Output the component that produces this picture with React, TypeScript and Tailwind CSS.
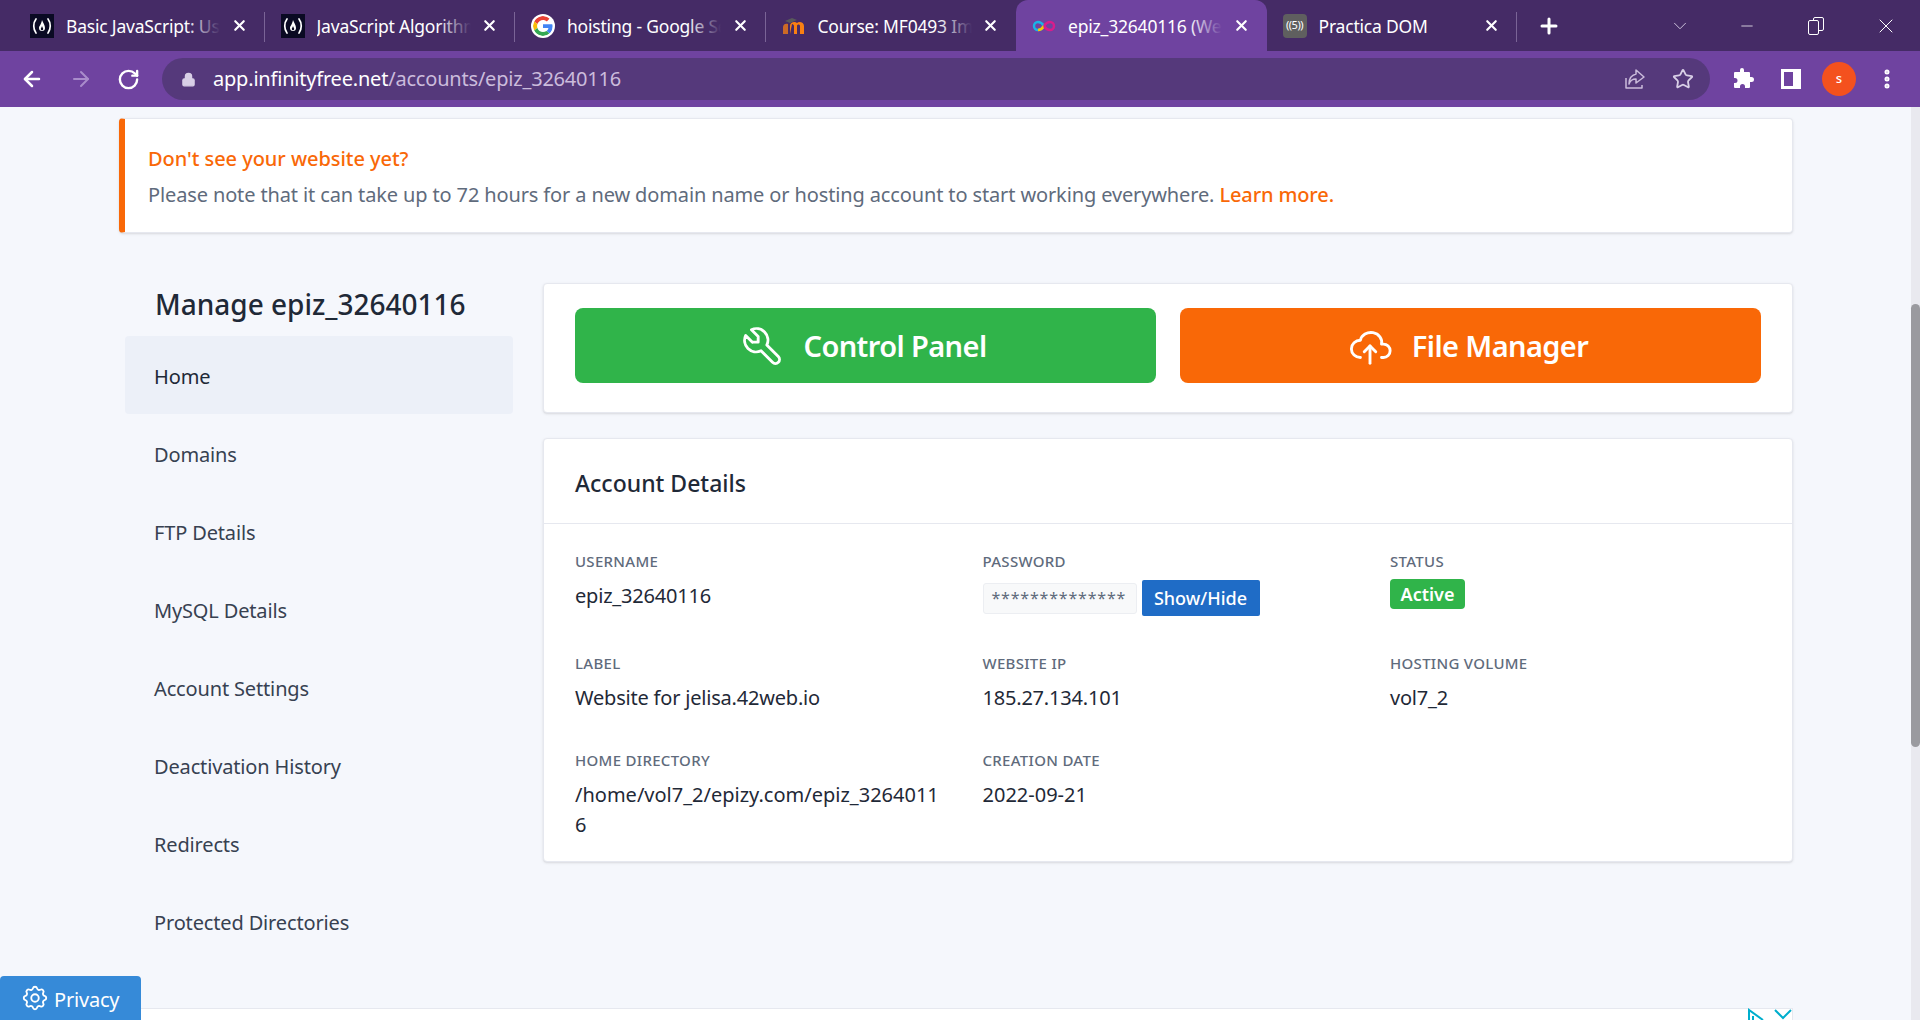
import React from "react";
import { ArrowLeft, ArrowRight, RotateCw, Lock, Star, X, Plus, ChevronDown, Minus, EllipsisVertical } from "lucide-react";
import { TbTool, TbCloudUpload, TbSettings } from "react-icons/tb";

const Fcc = () => (
  <svg viewBox="0 0 24 24" className="h-6 w-6 shrink-0 bg-[#0a0a23]" fill="none" stroke="white" strokeWidth="1.700" strokeLinecap="round">
    <path d="M6 5c-3 4-3 10 0 14" />
    <path d="M18 5c3 4 3 10 0 14" />
    <path d="M12 6c1 3 3 5 3 8a3 3 0 0 1-6 0c0-2 2-3 3-8z" fill="white" stroke="none" />
    <path d="M12 12c.5 1.500 1.200 2 1.200 3a1.200 1.200 0 0 1-2.400 0c0-1 .8-1.500 1.200-3z" fill="#0a0a23" stroke="none" />
  </svg>
);
const Google = () => (
  <svg viewBox="0 0 48 48" className="h-6 w-6 shrink-0 rounded-full bg-white p-[2px]">
    <path fill="#EA4335" d="M24 9.500c3.500 0 6.700 1.200 9.200 3.600l6.900-6.900C35.900 2.400 30.400 0 24 0 14.600 0 6.500 5.400 2.600 13.200l8 6.200C12.500 13.700 17.800 9.500 24 9.500z" />
    <path fill="#4285F4" d="M47 24.500c0-1.600-.1-3.100-.4-4.500H24v9h13c-.6 3-2.200 5.500-4.700 7.200l7.700 6C44.400 38 47 31.900 47 24.500z" />
    <path fill="#FBBC05" d="M10.600 28.600A14.500 14.500 0 0 1 10.600 19.400l-8-6.200a24 24 0 0 0 0 21.600l8-6.200z" />
    <path fill="#34A853" d="M24 48c6.500 0 11.900-2.100 15.900-5.800l-7.700-6c-2.200 1.400-4.900 2.300-8.200 2.300-6.200 0-11.500-4.200-13.400-9.900l-8 6.200C6.500 42.600 14.600 48 24 48z" />
  </svg>
);
const Moodle = () => (
  <svg viewBox="0 0 24 24" className="h-6 w-6 shrink-0">
    <path d="M1 20v-7c0-3 3-4 5-3v10z" fill="#f98012" opacity="0.75" />
    <path d="M8 20v-8c0-4 5-5 7-3 2-2 7-1 7 3v8h-4v-8c0-2-3-2-3 0v8h-3v-8c0-1-1-2-2-2z" fill="#f98012" />
    <path d="M3 7l7-3 5 2-7 3z" fill="#58595b" />
  </svg>
);
const Infinity2 = () => (
  <svg viewBox="0 0 24 24" className="h-6 w-6 shrink-0" fill="none" strokeWidth="2.500">
    <path d="M12 12c-2-3-4-4-6-4a4 4 0 0 0 0 8c2 0 4-1 6-4" stroke="#19b5e5" />
    <path d="M6 16c2 0 4-1 6-4" stroke="#f7c800" />
    <path d="M12 12c2-3 4-4 6-4a4 4 0 0 1 0 8c-2 0-4-1-6-4" stroke="#d81d8c" />
  </svg>
);
const Radio = () => (
  <div className="flex h-6 w-6 shrink-0 items-center justify-center rounded-[4px] bg-[#5f5f5f] text-[11px] tracking-[-0.5px] text-white">((5))</div>
);

function Tab({ icon, title, active, sep, fade = true }: { icon: React.ReactNode; title: string; active?: boolean; sep?: boolean; fade?: boolean }) {
  return (
    <div className={`relative flex h-[51px] w-[250.500px] shrink-0 items-center pl-[16px] pr-[14px] ${active ? "rounded-t-[12px] bg-[#6f43a0]" : ""}`}>
      {icon}
      <div className="relative ml-[12px] w-[154px] overflow-hidden whitespace-nowrap text-[17.500px] leading-[24px] tracking-[-0.2px] text-white">
        {title}
        {fade && (
          <div className={`absolute inset-y-0 right-0 w-[34px] bg-gradient-to-l ${active ? "from-[#6f43a0]" : "from-[#452b66]"} to-transparent`} />
        )}
      </div>
      <X className="ml-auto mr-[3px] h-[17px] w-[17px] text-white" strokeWidth={3} />
      {sep && <div className="absolute right-0 top-[12px] h-[30px] w-px bg-[#7a6496]" />}
    </div>
  );
}

const Label = ({ children }: { children: React.ReactNode }) => (
  <div className="text-[15px] font-medium uppercase leading-[20px] tracking-[0.3px] text-[#5f6b7c]">{children}</div>
);

const Field = ({ label, children }: { label: string; children: React.ReactNode }) => (
  <div className="min-w-0">
    <Label>{label}</Label>
    <div className="mt-[10px] break-all pr-[40px] text-[20px] leading-[30px] tracking-[-0.2px] text-[#1f2937]">{children}</div>
  </div>
);

const navItems = ["Domains", "FTP Details", "MySQL Details", "Account Settings", "Deactivation History", "Redirects", "Protected Directories"];

export default function App() {
  return (
    <div className="relative flex h-[1020px] w-[1920px] flex-col overflow-hidden bg-[#f5f7fc] font-['Noto_Sans','Open_Sans',sans-serif]">
      {/* Tab strip */}
      <div className="flex h-[51px] shrink-0 items-center bg-[#452b66] pl-[14px] text-white">
        <Tab icon={<Fcc />} title="Basic JavaScript: Use" sep />
        <Tab icon={<Fcc />} title="JavaScript Algorithm" sep />
        <Tab icon={<Google />} title="hoisting - Google Se" sep />
        <Tab icon={<Moodle />} title="Course: MF0493 Imp" />
        <Tab icon={<Infinity2 />} title="epiz_32640116 (Web" active />
        <Tab icon={<Radio />} title="Practica DOM" sep fade={false} />
        <Plus className="ml-[20px] h-[24px] w-[24px]" strokeWidth={3} />
        <ChevronDown className="ml-[108px] h-[22px] w-[22px] text-[#d8cfe6]" strokeWidth={1} />
        <Minus className="ml-[47px] h-[18px] w-[18px]" strokeWidth={1} />
        <div className="relative ml-[50px] h-[18px] w-[18px]">
          <div className="absolute right-0 top-0 h-[14px] w-[11px] rounded-[2px] border border-white" />
          <div className="absolute bottom-0 left-[2px] h-[15px] w-[11px] rounded-[2px] border border-white bg-[#452b66]" />
        </div>
        <X className="ml-[50px] h-[24px] w-[24px]" strokeWidth={1} />
      </div>

      {/* Toolbar */}
      <div className="flex h-[56px] shrink-0 items-center bg-[#6f43a0] pl-[20px] text-white">
        <ArrowLeft className="h-[24px] w-[24px]" strokeWidth={2.500} />
        <ArrowRight className="ml-[25px] h-[24px] w-[24px] text-[#a98ccb]" strokeWidth={2} />
        <RotateCw className="ml-[24px] h-[23px] w-[23px]" strokeWidth={2.500} />
        <div className="ml-[22px] flex h-[42px] w-[1548px] items-center rounded-full bg-[#55397b] pl-[19px] pr-[16px]">
          <Lock className="h-[15px] w-[15px] fill-[#d8cfe6] text-[#d8cfe6]" />
          <div className="ml-[17px] text-[20px] tracking-[-0.2px]">
            <span className="text-white">app.infinityfree.net</span>
            <span className="text-[#cbbcdc]">/accounts/epiz_32640116</span>
          </div>
          <svg viewBox="0 0 24 24" className="ml-auto h-[24px] w-[24px]" fill="none" stroke="#cbbcdc" strokeWidth="1.500" strokeLinejoin="round">
            <path d="M3 11v10h16v-3" />
            <path d="M13 3l8 7-8 6v-4c-4 0-6 2-7 5 0-6 3-9 7-10z" />
          </svg>
          <Star className="ml-[25px] h-[22px] w-[22px] text-[#d8cfe6]" strokeWidth={2} />
        </div>
        <svg viewBox="0 0 24 24" className="ml-[20px] h-[24px] w-[24px] fill-white">
          <path d="M10 3a2 2 0 0 1 4 0v2h5a1 1 0 0 1 1 1v4h1.500a2.500 2.500 0 0 1 0 5H20v5a1 1 0 0 1-1 1h-4v-1.500a2.500 2.500 0 0 0-5 0V21H5a1 1 0 0 1-1-1v-4h1a2.500 2.500 0 0 0 0-5H4V6a1 1 0 0 1 1-1h5z" />
        </svg>
        <div className="ml-[27px] flex h-[20px] w-[20px] justify-end border-[3px] border-white">
          <div className="h-full w-[5px] bg-white" />
        </div>
        <div className="ml-[21px] flex h-[34px] w-[34px] items-center justify-center rounded-full bg-[#f4511e] text-[13px] font-medium">s</div>
        <EllipsisVertical className="ml-[19px] h-[24px] w-[24px]" strokeWidth={3} />
      </div>

      {/* Page */}
      <div className="flex min-h-0 flex-1">
        <div className="relative flex min-w-0 flex-1 flex-col pl-[119px] pt-[11px]">
          {/* Alert */}
          <div className="flex h-[115px] w-[1674px] shrink-0 flex-col justify-center rounded-[4px] border border-l-[6px] border-[#e6e8ef] border-l-[#f96807] bg-white pl-[23px] pt-[2px] shadow-sm">
            <div className="text-[20px] font-medium leading-[30px] tracking-[-0.05px] text-[#f96807]">Don't see your website yet?</div>
            <div className="mt-[6px] text-[20px] leading-[30px] tracking-[-0.13px] text-[#5f6b7c]">
              Please note that it can take up to 72 hours for a new domain name or hosting account to start working everywhere.{" "}
              <span className="font-medium text-[#f96807]">Learn more.</span>
            </div>
          </div>

          <div className="mt-[50px] flex w-[1674px] items-start">
            {/* Sidebar */}
            <div className="ml-[6px] w-[388px] shrink-0 pt-[3px]">
              <h1 className="pl-[30px] text-[28px] font-medium leading-[36px] text-[#1f2937]">Manage epiz_32640116</h1>
              <div className="mt-[14px] flex h-[78px] items-center rounded-[4px] bg-[#ecf0f8] pl-[29px] pt-[4px] text-[20px] tracking-[-0.1px] text-[#1f2937]">Home</div>
              {navItems.map((n) => (
                <div key={n} className="flex h-[78px] items-center pl-[29px] pt-[4px] text-[20px] tracking-[-0.15px] text-[#374151]">{n}</div>
              ))}
            </div>

            {/* Main */}
            <div className="ml-[30px] flex-1">
              <div className="grid h-[130px] grid-cols-2 items-start gap-[24px] rounded-[4px] border border-[#e6e8ef] bg-white px-[31px] pt-[24px] shadow-sm">
                <div className="flex h-[75px] items-center justify-center gap-[19px] rounded-[8px] bg-[#30b44a] pr-[6px] text-[29px] font-semibold tracking-[-0.6px] text-white">
                  <TbTool className="h-[46px] w-[46px]" strokeWidth={1.500} />
                  Control Panel
                </div>
                <div className="flex h-[75px] items-center justify-center gap-[19px] rounded-[8px] bg-[#f96807] pr-[6px] text-[29px] font-semibold tracking-[-0.6px] text-white">
                  <TbCloudUpload className="h-[46px] w-[46px]" strokeWidth={1.500} />
                  File Manager
                </div>
              </div>

              <div className="mt-[25px] rounded-[4px] border border-[#e6e8ef] bg-white shadow-sm">
                <div className="flex h-[85px] items-center border-b border-[#e6e8ef] pl-[31px] pt-[4px] text-[23px] font-medium text-[#1f2937]">Account Details</div>
                <div className="grid grid-cols-[407.500px_407.500px_1fr] gap-y-[37px] pb-[21px] pl-[31px] pt-[27px]">
                  <Field label="Username">epiz_32640116</Field>
                  <div>
                    <Label>Password</Label>
                    <div className="mt-[9px] flex items-center">
                      <div className="flex h-[31px] w-[154px] items-center rounded-[3px] border border-[#eceef2] bg-[#f8f9fa] pl-[8px] text-[16px] tracking-[0.8px] text-[#5f6b7c]">**************</div>
                      <div className="ml-[5px] flex h-[36px] w-[118px] items-center justify-center rounded-[2px] bg-[#1f6cc6] text-[18px] font-medium text-white">Show/Hide</div>
                    </div>
                  </div>
                  <div>
                    <Label>Status</Label>
                    <div className="mt-[8px] flex h-[30px] w-[75px] items-center justify-center rounded-[4px] bg-[#30b44a] text-[18px] font-semibold text-white">Active</div>
                  </div>
                  <Field label="Label">Website for jelisa.42web.io</Field>
                  <Field label="Website IP">185.27.134.101</Field>
                  <Field label="Hosting Volume">vol7_2</Field>
                  <Field label="Home Directory"><span className="tracking-[0px]">/home/vol7_2/epizy.com/epiz_32640116</span></Field>
                  <Field label="Creation Date"><span className="tracking-[0px]">2022-09-21</span></Field>
                </div>
              </div>
            </div>
          </div>

          {/* Ad strip */}
          <div className="absolute left-[119px] top-[901px] h-[40px] w-[1674px] border border-[#e6e8ef] bg-white" />
        </div>
        {/* Scrollbar */}
        <div className="w-[9px] shrink-0 bg-[#e9e9ef] pt-[197px]">
          <div className="h-[443px] rounded-full bg-[#9a9a9f]" />
        </div>
      </div>

      {/* Privacy */}
      <div className="absolute bottom-0 left-0 flex h-[44px] w-[141px] items-center gap-[4px] rounded-t-[4px] bg-[#368ad8] pl-[20px] text-[20px] tracking-[-0.2px] text-white">
        <TbSettings className="h-[30px] w-[30px]" strokeWidth={1.500} />
        <span className="pt-[3px]">Privacy</span>
      </div>
      <svg viewBox="0 0 50 12" className="absolute bottom-0 left-[1747px] h-[12px] w-[50px]" fill="none" stroke="#00aecd" strokeWidth="2">
        <path d="M2 12V2l14 10M6 12V8" />
        <path d="M28 2l8 8 8-8" />
      </svg>
    </div>
  );
}
